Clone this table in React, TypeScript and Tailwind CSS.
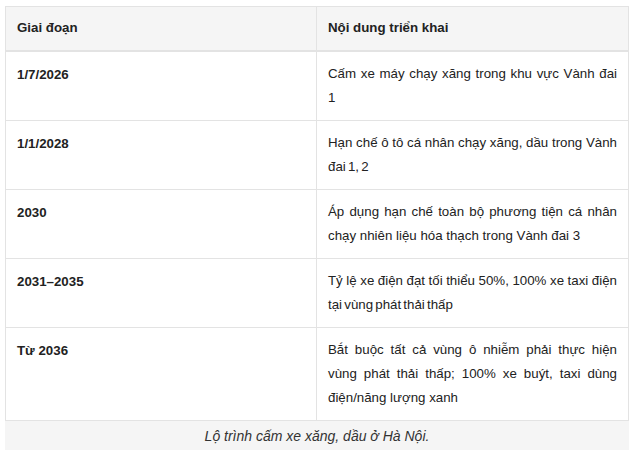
import React from "react";

type Row = {
  phase: string;
  content: string;
  tight?: boolean;
};

const ROWS: Row[] = [
  { phase: "1/7/2026", content: "Cấm xe máy chạy xăng trong khu vực Vành đai 1" },
  {
    phase: "1/1/2028",
    content: "Hạn chế ô tô cá nhân chạy xăng, dầu trong Vành đai 1, 2",
    tight: true,
  },
  {
    phase: "2030",
    content: "Áp dụng hạn chế toàn bộ phương tiện cá nhân chạy nhiên liệu hóa thạch trong Vành đai 3",
  },
  {
    phase: "2031–2035",
    content: "Tỷ lệ xe điện đạt tối thiểu 50%, 100% xe taxi điện tại vùng phát thải thấp",
    tight: true,
  },
  {
    phase: "Từ 2036",
    content:
      "Bắt buộc tất cả vùng ô nhiễm phải thực hiện vùng phát thải thấp; 100% xe buýt, taxi dùng điện/năng lượng xanh",
  },
];

export default function App() {
  return (
    <div
      className="w-[634px] h-[450px] bg-white pt-[6px] pl-[5px] overflow-hidden"
      style={{ fontFamily: '"Liberation Sans", Arial, sans-serif' }}
    >
      <div className="w-[624px]">
        <table className="w-full border-collapse text-[13.3px] text-[#222]">
          <thead>
            {/* Header */}
            <tr className="bg-[#f5f5f5]">
              <th className="w-[311px] border border-[#e3e3e3] border-b-2 text-left font-bold px-[11px] h-[44px] align-middle">
                Giai đoạn
              </th>
              <th className="border border-[#e3e3e3] border-b-2 text-left font-bold px-[11px] align-middle">
                Nội dung triển khai
              </th>
            </tr>
          </thead>
          <tbody>
            {ROWS.map((r, i) => (
              <tr key={i}>
                <td className="border border-[#e3e3e3] align-top font-bold px-[11px] pt-[11px] pb-[10px] leading-[24px]">
                  {r.phase}
                </td>
                <td
                  className={`border border-[#e3e3e3] align-top px-[11px] pt-[10px] pb-[10px] leading-[24px] text-justify ${
                    r.tight ? "[word-spacing:-1.5px]" : ""
                  }`}
                >
                  {r.content}
                </td>
              </tr>
            ))}
          </tbody>
        </table>

        {/* Caption */}
        <div className="bg-[#f5f5f5] h-[32px] flex items-center justify-center italic text-[14px] text-[#333]">
          Lộ trình cấm xe xăng, dầu ở Hà Nội.
        </div>
      </div>
    </div>
  );
}
